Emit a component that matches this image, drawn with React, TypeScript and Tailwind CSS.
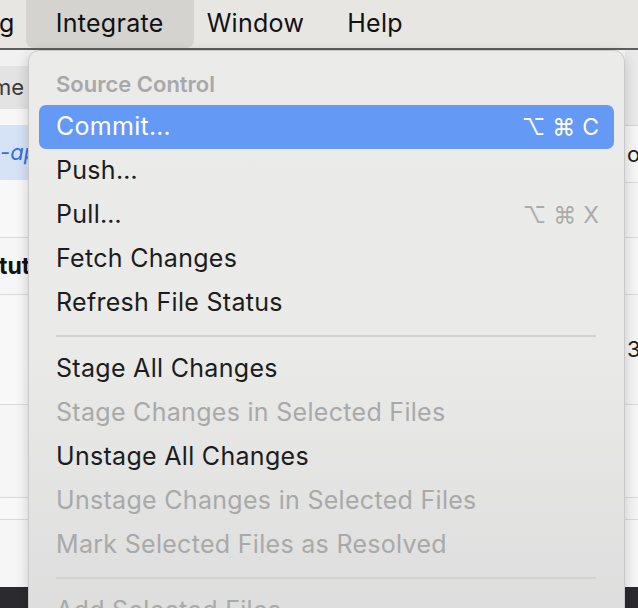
const font = { fontFamily: 'Inter, "Noto Sans", sans-serif' }

type Item = { label: string; shortcut?: string; disabled?: boolean; active?: boolean }

const groups: Item[][] = [
  [
    { label: 'Commit…', shortcut: '⌥⌘C', active: true },
    { label: 'Push…' },
    { label: 'Pull…', shortcut: '⌥⌘X' },
    { label: 'Fetch Changes' },
    { label: 'Refresh File Status' },
  ],
  [
    { label: 'Stage All Changes' },
    { label: 'Stage Changes in Selected Files', disabled: true },
    { label: 'Unstage All Changes' },
    { label: 'Unstage Changes in Selected Files', disabled: true },
    { label: 'Mark Selected Files as Resolved', disabled: true },
  ],
  [{ label: 'Add Selected Files', disabled: true }],
]

function Shortcut({ keys, className }: { keys: string; className: string }) {
  return (
    <span className={`flex items-center gap-[7px] text-[23px] ${className}`}>
      {keys.split('').map((k, i) => (
        <span key={i}>{k}</span>
      ))}
    </span>
  )
}

function MenuRow({ item }: { item: Item }) {
  const color = item.active ? 'text-white' : item.disabled ? 'text-[#a9a9a9]' : 'text-[#1c1c1c]'
  return (
    <div
      className={`h-[44px] mx-[10px] pl-[17px] pr-[15px] flex items-center justify-between rounded-[7px] ${
        item.active ? 'bg-[#6499f5]' : ''
      }`}
    >
      <span className={`text-[25px] tracking-[0.3px] whitespace-nowrap ${color}`}>{item.label}</span>
      {item.shortcut && (
        <Shortcut keys={item.shortcut} className={item.active ? 'text-white' : 'text-[#ababab]'} />
      )}
    </div>
  )
}

function Separator() {
  return (
    <div className="h-[22px] flex items-center pl-[27px] pr-[28px]">
      <div className="h-[2px] w-full bg-[#d2d2d2]" />
    </div>
  )
}

export default function App() {
  return (
    <div className="w-[638px] h-[608px] relative overflow-hidden bg-[#f4f4f4]" style={font}>
      {/* menu bar */}
      <div className="h-[50px] flex items-center gap-[41px] bg-[#e8e6e3] border-b-2 border-[#5e5e5e] text-[25px] tracking-[0.3px] text-[#111]">
        <span className="ml-[-1px]">g</span>
        <span className="h-[48px] flex items-center px-[30px] mx-[-30px] bg-[#d5d3cf] rounded-b-[8px]">Integrate</span>
        <span className="ml-[2px]">Window</span>
        <span className="ml-[2px]">Help</span>
      </div>

      {/* app content behind the menu */}
      <div className="flex h-[558px]">
        <div className="w-[40px] flex flex-col overflow-hidden">
          <div className="h-[16px] bg-[#f1f1f1]" />
          <div className="h-[43px] bg-[#e3e3e3] flex items-center text-[22px] text-[#3a3a3a] whitespace-nowrap">
            <span className="ml-[-8px]">me</span>
            <span className="ml-[7px] h-[10px] w-[2px] bg-[#9a9a9a]" />
          </div>
          <div className="h-[16px] bg-[#f7f7f7]" />
          <div className="h-[55px] bg-[#d6e3f6] flex items-center text-[22px] italic text-[#2e6fe3] whitespace-nowrap">
            -ap
          </div>
          <div className="h-[58px] bg-[#f8f8f8] border-b border-[#dadada]" />
          <div className="h-[57px] bg-[#f6f6f6] border-b border-[#dadada] flex items-center text-[23px] font-bold text-[#111] whitespace-nowrap">
            <span className="ml-[-1px]">tut</span>
          </div>
          <div className="h-[110px] bg-[#f8f8f8] border-b border-[#dadada]" />
          <div className="h-[93px] bg-[#f6f6f6] border-b border-[#dadada]" />
          <div className="h-[22px] bg-[#f8f8f8] border-b border-[#dadada]" />
          <div className="h-[67px] bg-[#f6f6f6]" />
          <div className="flex-1 bg-[#2b2b2f]" />
        </div>
        <div className="flex-1 bg-[#f6f6f6]" />
        <div className="w-[13px] flex flex-col overflow-hidden text-[22px] text-[#1c1c1c]">
          <div className="h-[76px] bg-[#eaeaea] border-b border-[#d6d6d6]" />
          <div className="h-[57px] bg-[#f6f6f6] border-b border-[#dadada] flex items-center pl-[2px] whitespace-nowrap">
            o’
          </div>
          <div className="h-[55px] bg-[#f4f4f4] border-b border-[#dadada]" />
          <div className="h-[57px] bg-[#f6f6f6] border-b border-[#dadada]" />
          <div className="h-[110px] bg-[#f4f4f4] border-b border-[#dadada] flex items-center pl-[2px]">3</div>
          <div className="h-[93px] bg-[#f6f6f6] border-b border-[#dadada]" />
          <div className="h-[22px] bg-[#f4f4f4] border-b border-[#dadada]" />
          <div className="h-[67px] bg-[#f6f6f6]" />
          <div className="flex-1 bg-[#2b2b2f]" />
        </div>
      </div>

      {/* dropdown menu */}
      <div className="absolute left-[28px] top-[50px] w-[597px] h-[600px] rounded-t-[11px] border border-[#c9c9c9] bg-linear-to-b from-[#ebebea] via-[#eaeae9] to-[#dcdcdc] shadow-[0_4px_14px_rgba(0,0,0,0.18)] pt-[12px]">
        <div className="h-[42px] flex items-center pl-[27px] text-[22px] font-semibold text-[#a8a8a8]">
          Source Control
        </div>
        {groups.map((g, gi) => (
          <div key={gi}>
            {gi > 0 && <Separator />}
            {g.map((item) => (
              <MenuRow key={item.label} item={item} />
            ))}
          </div>
        ))}
      </div>
    </div>
  )
}
